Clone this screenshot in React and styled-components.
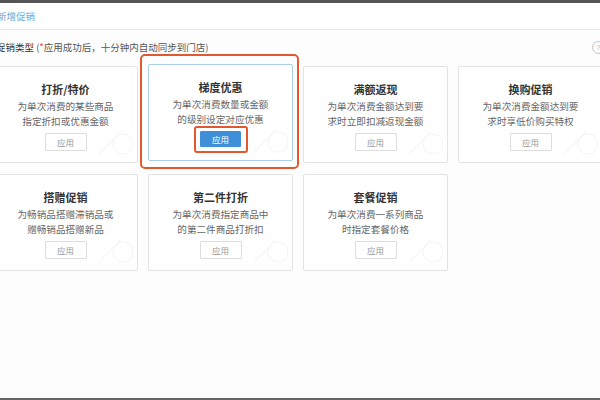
import styled, { createGlobalStyle } from "styled-components";

const GlobalStyle = createGlobalStyle`
  html, body {
    margin: 0;
    padding: 0;
    background: #fdfdfd;
    overflow: hidden;
  }
  body {
    font-family: "Noto Sans CJK SC", "Noto Sans", sans-serif;
    width: 600px;
    height: 400px;
  }
`;

const promos = [
  { title: "打折/特价", lines: ["为单次消费的某些商品", "指定折扣或优惠金额"] },
  { title: "梯度优惠", lines: ["为单次消费数量或金额", "的级别设定对应优惠"], active: true },
  { title: "满额返现", lines: ["为单次消费金额达到要", "求时立即扣减返现金额"] },
  { title: "换购促销", lines: ["为单次消费金额达到要", "求时享低价购买特权"] },
  { title: "搭赠促销", lines: ["为畅销品搭赠滞销品或", "赠畅销品搭赠新品"] },
  { title: "第二件打折", lines: ["为单次消费指定商品中", "的第二件商品打折扣"] },
  { title: "套餐促销", lines: ["为单次消费一系列商品", "时指定套餐价格"] },
];

function App() {
  return (
    <Screen>
      <GlobalStyle />
      <TopBar />
      <Header>新增促销</Header>
      <Body>
        <TypeRow>
          <TypeLabel>
            促销类型 <Note>(<Star>*</Star>应用成功后，十分钟内自动同步到门店)</Note>
          </TypeLabel>
          <HelpIcon>?</HelpIcon>
        </TypeRow>
        <Grid>
          {promos.map((p) => (
            <Card key={p.title} active={p.active}>
              <Watermark viewBox="0 0 40 40" fill="none">
                <path d="M6 36 L28 14" stroke="#f4f6f6" strokeWidth="1.2" />
                <circle cx="30" cy="26" r="10" stroke="#f4f6f6" strokeWidth="1.2" />
              </Watermark>
              <Title>{p.title}</Title>
              {p.lines.map((l) => (
                <Desc key={l}>{l}</Desc>
              ))}
              <ApplyButton active={p.active}>应用</ApplyButton>
            </Card>
          ))}
        </Grid>
      </Body>
      <BottomBar />
    </Screen>
  );
}

const Screen = styled.div`
  width: 600px;
  height: 400px;
  display: flex;
  flex-direction: column;
  background: #fdfdfd;
`;

const TopBar = styled.div`
  height: 3px;
  background: #555;
  flex-shrink: 0;
`;

const Header = styled.div`
  height: 26px;
  line-height: 26px;
  margin-left: -3px;
  font-size: 9.5px;
  color: #6aa9d4;
  border-bottom: 1px solid #e6e6e6;
  flex-shrink: 0;
  background: #fff;
`;

const Body = styled.div`
  flex: 1;
  margin-left: -7px;
  width: 620px;
`;

const TypeRow = styled.div`
  display: flex;
  align-items: center;
  justify-content: space-between;
  height: 32px;
  margin-top: 1px;
  padding-left: 3px;
  padding-right: 8px;
`;

const TypeLabel = styled.div`
  font-size: 9.5px;
  color: #333;
`;

const Note = styled.span`
  color: #555;
`;

const Star = styled.span`
  color: #e33;
`;

const HelpIcon = styled.div`
  width: 11px;
  height: 11px;
  border: 1px solid #c4c4c4;
  border-radius: 50%;
  color: #bbb;
  font-size: 8px;
  line-height: 11px;
  text-align: center;
  font-family: "Liberation Sans", sans-serif;
`;

const Grid = styled.div`
  display: grid;
  grid-template-columns: repeat(4, 145px);
  column-gap: 10px;
  row-gap: 11px;
  margin-top: 3px;
`;

const Card = styled.div`
  position: relative;
  height: 97px;
  box-sizing: border-box;
  background: #fff;
  border: 1px solid ${(p) => (p.active ? "#a9cfe9" : "#e3e3e3")};
  border-radius: 2px;
  display: flex;
  flex-direction: column;
  align-items: center;
  padding-top: 13px;
  margin-top: ${(p) => (p.active ? "-2px" : "0")};
  ${(p) =>
    p.active &&
    `
    &::after {
      content: "";
      position: absolute;
      top: -11px;
      left: -9px;
      right: -7px;
      bottom: -9px;
      border: 2px solid #e2592f;
      border-radius: 5px;
      pointer-events: none;
    }
  `}
`;

const Watermark = styled.svg`
  position: absolute;
  right: 4px;
  bottom: 4px;
  width: 40px;
  height: 40px;
`;

const Title = styled.div`
  font-size: 11px;
  font-weight: 700;
  color: #333;
  line-height: 18px;
  margin-bottom: 1px;
`;

const Desc = styled.div`
  font-size: 9.6px;
  color: #666;
  line-height: 15px;
`;

const ApplyButton = styled.div`
  position: relative;
  margin-top: 4px;
  width: ${(p) => (p.active ? "41px" : "42px")};
  height: ${(p) => (p.active ? "16px" : "18px")};
  box-sizing: border-box;
  border: 1px solid ${(p) => (p.active ? "#3f8fd8" : "#ddd")};
  background: ${(p) => (p.active ? "#3f8fd8" : "#fff")};
  color: ${(p) => (p.active ? "#fff" : "#999")};
  font-size: 8.5px;
  display: flex;
  align-items: center;
  justify-content: center;
  border-radius: 1px;
  ${(p) =>
    p.active &&
    `
    &::after {
      content: "";
      position: absolute;
      top: -6px;
      left: -7px;
      right: -8px;
      bottom: -7px;
      border: 2px solid #e2592f;
      border-radius: 3px;
    }
  `}
`;

const BottomBar = styled.div`
  height: 2px;
  background: #666;
  flex-shrink: 0;
`;

export default App;
